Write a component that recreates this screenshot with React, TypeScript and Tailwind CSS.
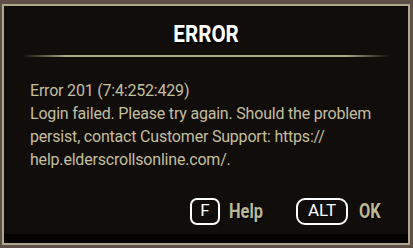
export default function App() {
  return (
    <div
      className="w-[413px] h-[248px] bg-[#5f4f49] pt-[4px] pl-[2px] pr-[3px] pb-[3px] flex"
      style={{ fontFamily: "Roboto, 'Noto Sans', sans-serif" }}
    >
      <div className="flex-1 flex flex-col border-2 border-[#aca88c] bg-[#100d0b]">
        <div className="pt-[16px] flex justify-center">
          <span className="inline-block text-[24px] leading-[24px] font-bold text-white scale-x-[0.86] [text-shadow:2px_2px_0_#000]">
            ERROR
          </span>
        </div>
        <div className="mt-[9px] mx-[18px] h-[2px] bg-[linear-gradient(to_right,transparent,#aca88c_12%,#aca88c_88%,transparent)]" />
        <div className="pl-[26px] pr-[20px] pt-[22px] text-[16px] leading-[23px] text-[#c4bf9f] tracking-[-0.2px]">
          <div>Error 201 (7:4:252:429)</div>
          <div>
            Login failed. Please try again. Should the problem persist, contact Customer Support: https://
            help.elderscrollsonline.com/.
          </div>
        </div>
        <div className="flex-1" />
        <div className="flex items-center justify-end pr-[27px] mb-[8px]">
          <div className="w-[30px] h-[27px] border-2 border-white rounded-[7px] flex items-center justify-center text-white text-[17px]">
            F
          </div>
          <span className="ml-[9px] inline-block text-[20px] font-bold text-[#bdb892] scale-x-[0.82] origin-left [text-shadow:2px_2px_0_#000] w-[44px]">
            Help
          </span>
          <div className="ml-[23px] w-[52px] h-[27px] border-2 border-white rounded-[9px] flex items-center justify-center text-white text-[17px]">
            ALT
          </div>
          <span className="ml-[11px] inline-block text-[20px] font-bold text-[#bdb892] scale-x-[0.82] origin-left [text-shadow:2px_2px_0_#000] w-[22px]">
            OK
          </span>
        </div>
        <div className="h-[9px] bg-[#050403]" />
      </div>
    </div>
  );
}
